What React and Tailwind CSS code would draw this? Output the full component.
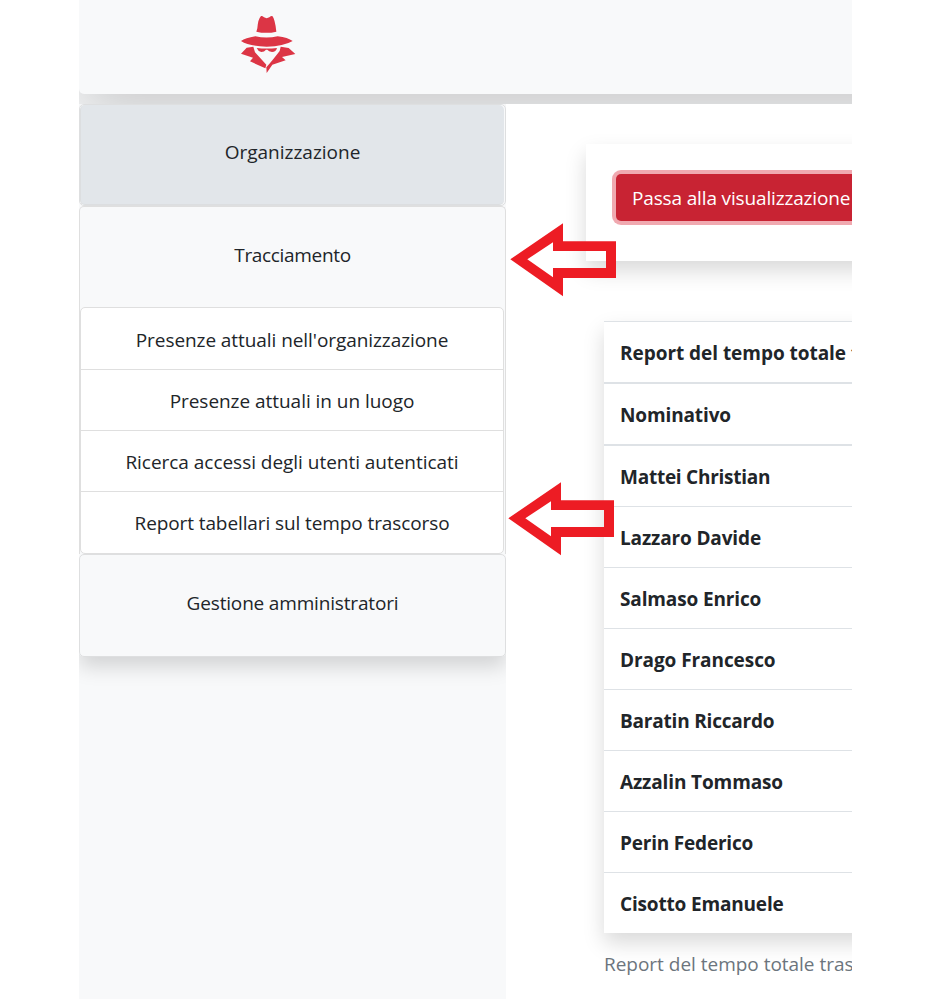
import React from "react";

const names = [
  ["Mattei Christian", "tracking-[-0.25px]"],
  ["Lazzaro Davide", "tracking-[-0.14px]"],
  ["Salmaso Enrico", "tracking-[-0.14px]"],
  ["Drago Francesco", "tracking-[-0.07px]"],
  ["Baratin Riccardo", "tracking-[-0.2px]"],
  ["Azzalin Tommaso", "tracking-[-0.13px]"],
  ["Perin Federico", "tracking-[-0.2px]"],
  ["Cisotto Emanuele", "tracking-[-0.17px]"],
];

function SpyLogo() {
  return (
    <svg viewBox="0 0 240 240" className="ml-[151px] mt-[5px] size-20" fill="#dc3545">
      <path d="M82 70Q84 42 93 33Q97 32 102 37Q110 42 118 37Q123 32 127 33Q135 42 139 80Q109 87 79 80Z" />
      <path d="M33 108Q46 99 76 94Q109 101 143 94Q174 98 188 108Q161 124 110 125Q58 124 33 108Z" />
      <path d="M80 129Q111 132 141 129Q138 141 126 141Q116 140 112 134L108 134Q103 141 94 141Q84 139 80 129Z" />
      <path d="M50 128L70 125L75 142L109 179L106 190L60 169L69 158L33 146Z" />
      <path d="M152 125L176 129L196 147L156 156L167 166L127 179L110 204L109 187Q126 168 149 138Z" />
    </svg>
  );
}

function Arrow({ className }) {
  return (
    <svg viewBox="0 0 106 74" className={"absolute h-[74px] w-[106px] " + className} fill="#ed1c24" fillRule="evenodd">
      <path d="M.3 36.3L53 .3V18.3H106V55H53V73.3ZM17.3 36.3L43 54.3V45H96V28H43V19.3Z" />
    </svg>
  );
}

function SubItem({ children, className }) {
  return <div className={"flex items-center justify-center border-[#dfdfdf] " + className}>{children}</div>;
}

export default function App() {
  return (
    <div className="relative h-[999px] w-[930px] overflow-hidden bg-white pl-[79px] font-['Open_Sans','Noto_Sans',sans-serif] text-[19px] leading-[30px] text-[#212529]">
      <div className="h-[999px] w-[773px] overflow-hidden">
        <div className="h-[104px] overflow-hidden bg-[#f8f9fa]">
          <header className="flow-root h-[94px] w-[900px] rounded-b-[5px] bg-[#f8f9fa] shadow-[0_20px_60px_rgba(0,0,0,0.19)]">
            <SpyLogo />
          </header>
        </div>
        <div className="flex h-[895px]">
          <aside className="w-[427px] shrink-0 overflow-hidden bg-[#f8f9fa]">
            <nav className="flex flex-col rounded-[5px] bg-[#f8f9fa] shadow-[0_10px_20px_rgba(0,0,0,0.15)]">
              <div className="h-[102px] rounded-[5px] border border-[#dedfe0] pr-px">
                <div className="flex h-full items-center justify-center rounded-[5px] border-b border-l border-[#dcdee0] bg-[#e2e6ea] pb-[6px]">
                  <span>Organizzazione</span>
                </div>
              </div>
              <div className="rounded-t-[5px] border border-b-0 border-[#dfdfdf]">
                <div className="flex h-[100px] items-center justify-center pb-1">
                  <span className="tracking-[-0.33px]">Tracciamento</span>
                </div>
                <div className="mr-px rounded-[5px] border border-[#dfdfdf] bg-white">
                  <SubItem className="h-[62px] border-b pt-[2px]"><span className="tracking-[-0.07px]">Presenze attuali nell'organizzazione</span></SubItem>
                  <SubItem className="h-[61px] border-b pt-[2px]"><span className="tracking-[-0.04px]">Presenze attuali in un luogo</span></SubItem>
                  <SubItem className="h-[61px] border-b pt-[2px]"><span className="tracking-[-0.03px]">Ricerca accessi degli utenti autenticati</span></SubItem>
                  <SubItem className="h-[61px]"><span className="tracking-[-0.1px]">Report tabellari sul tempo trascorso</span></SubItem>
                </div>
              </div>
              <div className="flex h-[103px] items-center justify-center rounded-[5px] border border-[#dedfe0] pb-[6px]">
                <span className="tracking-[-0.17px]">Gestione amministratori</span>
              </div>
            </nav>
          </aside>
          <main className="w-[346px] overflow-hidden pl-20 pt-10">
            <section className="h-[117px] w-[500px] bg-white p-[30px] shadow-[0_10px_20px_rgba(0,0,0,0.15)]">
              <button className="flex h-[47px] w-[440px] items-center whitespace-nowrap rounded-[5px] bg-[#c82333] px-4 pt-px text-white shadow-[0_0_0_4px_rgba(225,83,97,0.5)]">
                <span className="tracking-[-0.15px]">Passa alla visualizzazione</span>
              </button>
            </section>
            <section className="ml-[18px] mt-[60px] w-[500px] whitespace-nowrap">
              <div className="bg-white font-bold shadow-[0_10px_20px_rgba(0,0,0,0.15)]">
                <div className="flex h-[63px] items-center border-b-2 border-t border-[#dee2e6] pl-4 pt-[2px]">
                  <span className="tracking-[-0.04px]">Report del tempo totale t</span>
                </div>
                <div className="flex h-[62px] items-center border-b-2 border-[#dee2e6] pl-4 pt-[2px]">
                  <span className="tracking-[-0.13px]">Nominativo</span>
                </div>
                {names.map(([name, tracking], i) => (
                  <div key={name} className={"flex items-center pl-4 pt-[2px] " + (i ? "h-[61px] border-t border-[#dee2e6]" : "h-[60px]")}>
                    <span className={tracking}>{name}</span>
                  </div>
                ))}
              </div>
              <p className="pt-4 text-[#6c757d]"><span className="tracking-[-0.02px]">Report del tempo totale tras</span></p>
            </section>
          </main>
        </div>
      </div>
      <Arrow className="left-[510px] top-[223px]" />
      <Arrow className="left-[508px] top-[482px]" />
    </div>
  );
}
